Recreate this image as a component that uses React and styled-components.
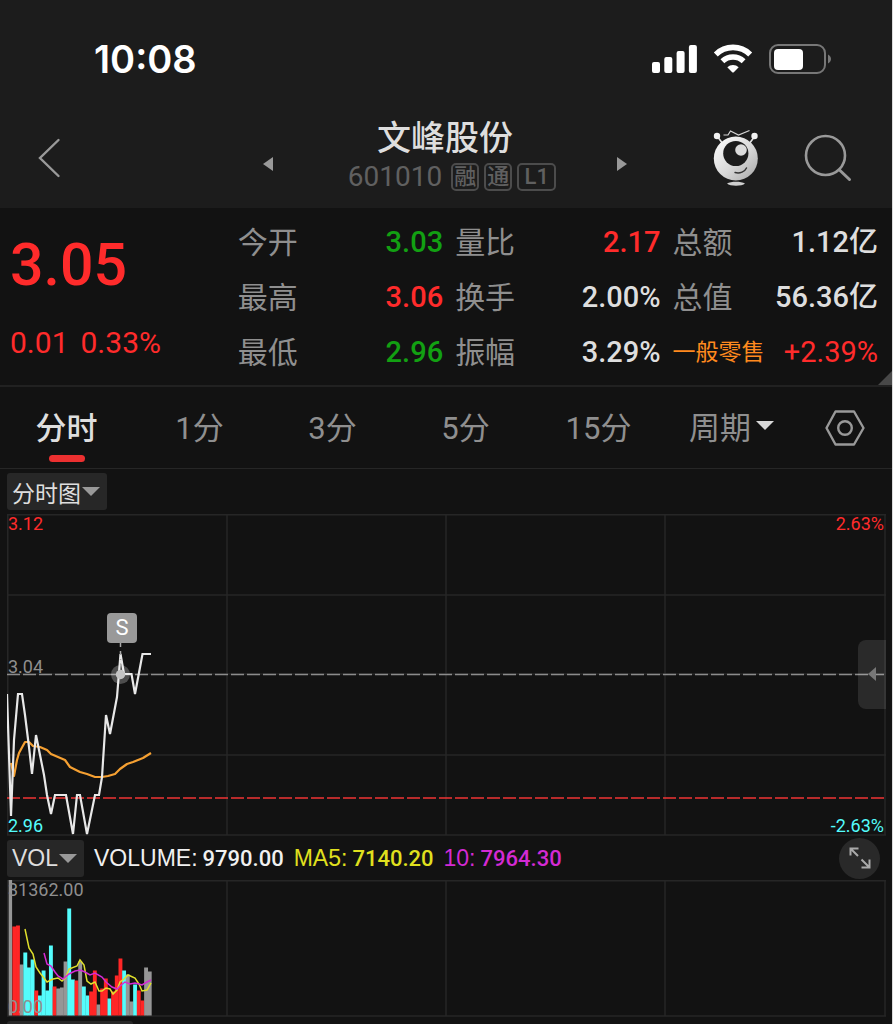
import React, { useState } from "react";
import styled, { createGlobalStyle } from "styled-components";

const quotes = [
  { label: "今开", value: "3.03", tone: "down" },
  { label: "量比", value: "2.17", tone: "up" },
  { label: "总额", value: "1.12亿" },
  { label: "最高", value: "3.06", tone: "up" },
  { label: "换手", value: "2.00%" },
  { label: "总值", value: "56.36亿" },
  { label: "最低", value: "2.96", tone: "down" },
  { label: "振幅", value: "3.29%" },
  { label: "一般零售", value: "+2.39%", tone: "up", sector: true },
];

const tabs = ["分时", "1分", "3分", "5分", "15分"];

const colors = {
  up: "#ff2b2b",
  down: "#12a012",
  text: "#dedede",
  muted: "#8f8f8f",
  cyan: "#54fcfc",
  line: "#262626",
};

// r = rise, f = fall, n = flat; the number is the bar height
const volumes = [
  ["n", 136], ["r", 89], ["r", 90], ["n", 51], ["f", 63], ["f", 48],
  ["f", 56], ["r", 25], ["f", 20], ["f", 45], ["f", 25], ["f", 70],
  ["r", 29], ["n", 27], ["n", 28], ["n", 54], ["f", 107], ["f", 36],
  ["r", 35], ["n", 54], ["f", 29], ["f", 20], ["r", 24], ["r", 45],
  ["n", 11], ["r", 27], ["r", 37], ["f", 17], ["r", 24], ["r", 40],
  ["r", 57], ["f", 45], ["n", 41], ["n", 14], ["f", 31], ["r", 25],
  ["r", 15], ["n", 48], ["n", 44],
];
const barFill = { r: "#ff2626", f: "#54fcfc", n: "#969696" };

const pricePoints =
  "0,180 4,302 7,226 11,180 15,180 18,201 22,233 25,260 29,221 33,241 37,261 40,281 44,300 48,281 59,281 66,320 70,281 73,281 80,320 88,281 92,281 95,263 99,201 103,220 110,183 113.5,140 117,160 124.5,160 128,180 135.5,140 144,140";
const averagePoints =
  "4,249 7,262 10,246 12,239 18,228 22,228 26,232 33,233 40,236 44,240 51,243 58,246 63,253 73,258 80,260 88,263 95,263 101,262 108,260 113,255 120,250 126,248 136,244 144,239";
const ma5Points =
  "18,49 22,68 26,74 29,87 33,93 37,98 40,102 46,99 51,98 55,101 59,97 62,89 70,86 73,80 77,85 80,101 84,104 88,102 92,111 95,111 99,108 103,109 106,114 110,110 113,102 117,99 121,95 128,98 132,104 135,111 140,110 144,103";
const ma10Points =
  "37,73 40,84 44,86 48,92 51,96 56,99 62,94 68,91 73,90 78,92 83,95 88,93 95,97 99,102 105,107 110,109 113,106 118,102 123,104 128,103 132,104 135,105 140,102 144,100";

const GridLines = ({ height, rows }) => (
  <g stroke={colors.line} strokeWidth="1.5">
    {[0.75, 220, 439, 658, 878].map((x) => (
      <line key={x} x1={x} x2={x} y1="0" y2={height} />
    ))}
    {rows.map((y) => (
      <line key={y} x1="0" x2="879" y1={y} y2={y} />
    ))}
  </g>
);

const PriceChart = () => (
  <ChartSvg viewBox="0 0 879 322" role="img" aria-label="分时图">
    <GridLines height={321} rows={[0.75, 81, 160, 241, 321]} />
    <line x1="0" x2="877" y1="160.5" y2="160.5" stroke="#8c8c8c" strokeWidth="1.5" strokeDasharray="13 3" />
    <line x1="0" x2="877" y1="284" y2="284" stroke="#f03535" strokeWidth="1.7" strokeDasharray="13 3" />
    <polyline points={averagePoints} fill="none" stroke="#f5a032" strokeWidth="2.2" strokeLinejoin="round" />
    <polyline points={pricePoints} fill="none" stroke="#e8e8e8" strokeWidth="2.2" />
    <circle cx="113.5" cy="160.5" r="9.5" fill="#fff" opacity="0.25" />
    <circle cx="113.5" cy="160.5" r="4.7" fill="#c4c4c4" />
    <line x1="113.5" x2="113.5" y1="129" y2="146" stroke="#a8a8a8" strokeWidth="1.5" strokeDasharray="4 4" />
    <rect x="100" y="99" width="30" height="30" rx="4" fill="#999" />
    <text x="115" y="121" textAnchor="middle" fontSize="22" fill="#fff">
      S
    </text>
  </ChartSvg>
);

const VolumeChart = () => (
  <ChartSvg viewBox="0 0 879 137" role="img" aria-label="成交量">
    <GridLines height={136} rows={[0.75, 136]} />
    {volumes.map(([kind, h], i) => (
      <rect
        key={i}
        x={1.7 + i * 3.66}
        y={135.5 - h}
        width={i === 0 ? 3.4 : 3.9}
        height={h}
        fill={barFill[kind]}
      />
    ))}
    <polyline points={ma5Points} fill="none" stroke="#e0e02c" strokeWidth="1.5" />
    <polyline points={ma10Points} fill="none" stroke="#d42ad4" strokeWidth="1.5" />
  </ChartSvg>
);

const StatusIcons = () => (
  <svg width="180" height="32" viewBox="0 0 180 32" aria-hidden="true">
    <g fill="#fff">
      <rect x="0" y="19" width="8" height="11" rx="2" />
      <rect x="12.3" y="14" width="8" height="16" rx="2" />
      <rect x="24.6" y="8" width="8" height="22" rx="2" />
      <rect x="36.9" y="2" width="8" height="28" rx="2" />
    </g>
    <g fill="none" stroke="#fff" strokeWidth="5.6">
      <path d="M63.8 11.4a24.5 24.5 0 0 1 34.4 0" />
      <path d="M70.4 18.2a15.6 15.6 0 0 1 21.2 0" />
    </g>
    <path d="M75.3 24.2a8.4 8.4 0 0 1 11.4 0l-4.9 5a1.2 1.2 0 0 1-1.6 0z" fill="#fff" />
    <rect x="118" y="2" width="55" height="28" rx="8" fill="none" stroke="#777" strokeWidth="2" />
    <rect x="122" y="6" width="29" height="21" rx="4" fill="#fff" />
    <path d="M176 11.5c4 2 4 7 0 9z" fill="#777" />
  </svg>
);

const RobotIcon = () => (
  <svg width="46" height="58" viewBox="0 0 46 58" aria-hidden="true">
    <defs>
      <linearGradient id="robot" x1="0" y1="0" x2="1" y2="1">
        <stop offset="0" stopColor="#fff" />
        <stop offset="0.55" stopColor="#d8d8d8" />
        <stop offset="1" stopColor="#a5a5a5" />
      </linearGradient>
    </defs>
    <path d="M4 7l6 8M42 7l-6 8" stroke="#e4e4e4" strokeWidth="1.6" />
    <circle cx="4" cy="7" r="3.2" fill="#f2f2f2" />
    <circle cx="41.5" cy="7" r="3.2" fill="#f2f2f2" />
    <path d="M10.500 6h4.500l2.500-4 8 4 11-4.500" fill="none" stroke="#d5d5d5" strokeWidth="1.2" />
    <circle cx="22.8" cy="29.5" r="22" fill="url(#robot)" />
    <circle cx="22.8" cy="24.5" r="12.6" fill="#1c1c1c" />
    <circle cx="28" cy="21" r="5.8" fill="#dcdcdc" />
    <path d="M22 43.5c5 1.5 10-1 11.5-4.5" fill="none" stroke="#333" strokeWidth="1.4" strokeLinecap="round" />
    <path d="M14 54.5c4-2.3 14-2.3 18 0-3 3-15 3-18 0z" fill="#cfcfcf" />
  </svg>
);

const SearchIcon = () => (
  <svg width="48" height="48" viewBox="0 0 48 48" fill="none" stroke="#999" aria-hidden="true">
    <circle cx="21.5" cy="21.5" r="19.5" strokeWidth="2.6" />
    <path d="M35.5 36l10 9.5" strokeWidth="3" strokeLinecap="round" />
  </svg>
);

const HexIcon = () => (
  <svg width="40" height="36" viewBox="0 0 40 36" fill="none" stroke="#999" strokeWidth="2.4" aria-hidden="true">
    <path d="M10.5 1.5h18.500l9.500 16.500-9.500 16.500h-18.500L1.500 18z" strokeLinejoin="round" />
    <circle cx="20" cy="18" r="6.8" />
  </svg>
);

const ExpandIcon = () => (
  <svg width="22" height="22" viewBox="0 0 22 22" fill="none" stroke="#aaa" strokeWidth="2" aria-hidden="true">
    <path d="M1.5 8.5v-7h8M2 2l7 7M20.5 12.5v8h-8M20 20l-7.5-7.5" />
  </svg>
);

function App() {
  const [active, setActive] = useState("分时");

  return (
    <Page>
      <GlobalStyle />
      <TopArea>
        <StatusBar>
          <Clock>10:08</Clock>
          <StatusIcons />
        </StatusBar>
        <Header>
          <IconButton aria-label="返回">
            <svg width="24" height="40" viewBox="0 0 24 40" aria-hidden="true">
              <path d="M20.5 2L2 20l18.5 18" fill="none" stroke="#999" strokeWidth="2.4" strokeLinecap="round" />
            </svg>
          </IconButton>
          <StockNav>
            <StepButton aria-label="上一只">
              <svg width="10" height="14" aria-hidden="true">
                <path d="M10 0v14L0 7z" fill="#999" />
              </svg>
            </StepButton>
            <StockTitle>
              <h1>文峰股份</h1>
              <div className="code">
                <span>601010</span>
                <Badge>融</Badge>
                <Badge>通</Badge>
                <Badge $wide>L1</Badge>
              </div>
            </StockTitle>
            <StepButton aria-label="下一只">
              <svg width="10" height="14" aria-hidden="true">
                <path d="M0 0v14l10-7z" fill="#999" />
              </svg>
            </StepButton>
          </StockNav>
          <Actions>
            <IconButton aria-label="助手">
              <RobotIcon />
            </IconButton>
            <IconButton aria-label="搜索">
              <SearchIcon />
            </IconButton>
          </Actions>
        </Header>
      </TopArea>

      <QuotePanel>
        <PriceBlock>
          <div className="price">3.05</div>
          <div className="change">
            <span>0.01</span>
            <span>0.33%</span>
          </div>
        </PriceBlock>
        {quotes.map((q) => (
          <Quote key={q.label} $tone={q.tone} $sector={q.sector}>
            <span className="label">{q.label}</span>
            <span className="value">{q.value}</span>
          </Quote>
        ))}
        <Corner />
      </QuotePanel>

      <TabBar>
        {tabs.map((tab) => (
          <Tab key={tab} $active={tab === active} onClick={() => setActive(tab)}>
            {tab}
          </Tab>
        ))}
        <Tab>
          周期
          <Caret $color="#d8d8d8" />
        </Tab>
        <SettingsButton aria-label="设置">
          <HexIcon />
        </SettingsButton>
      </TabBar>

      <ChartArea>
        <ToolRow>
          <Chip>
            分时图
            <Caret $color="#999" />
          </Chip>
        </ToolRow>
        <ChartBox>
          <PriceChart />
          <AxisLabels>
            <Axis $color={colors.up}>
              <span>3.12</span>
              <span>2.63%</span>
            </Axis>
            <Axis $color={colors.muted} $aboveLine>
              <span>3.04</span>
            </Axis>
            <Axis $color={colors.cyan}>
              <span>2.96</span>
              <span>-2.63%</span>
            </Axis>
          </AxisLabels>
          <DrawerHandle aria-label="展开盘口">
            <svg width="8" height="14" aria-hidden="true">
              <path d="M8 0v14L0 7z" fill="#777" />
            </svg>
          </DrawerHandle>
        </ChartBox>

        <IndicatorRow>
          <Chip>
            VOL
            <Caret $color="#999" />
          </Chip>
          <Indicator $color="#f0f0f0">
            <span className="name">VOLUME:</span>
            <span>9790.00</span>
          </Indicator>
          <Indicator $color="#e0e01e">
            <span className="name">MA5:</span>
            <span>7140.20</span>
          </Indicator>
          <Indicator $color="#d42ad4">
            <span className="name">10:</span>
            <span>7964.30</span>
          </Indicator>
          <RoundButton aria-label="全屏">
            <ExpandIcon />
          </RoundButton>
        </IndicatorRow>
        <ChartBox>
          <VolumeChart />
          <AxisLabels>
            <Axis $color={colors.muted}>
              <span>31362.00</span>
            </Axis>
            <Axis $color={colors.muted}>
              <span>0.00</span>
            </Axis>
          </AxisLabels>
        </ChartBox>
        <NextChip />
      </ChartArea>
    </Page>
  );
}

export default App;

const GlobalStyle = createGlobalStyle`
  * {
    box-sizing: border-box;
  }
  body {
    margin: 0;
    background: #121212;
    font-family: Roboto, "Noto Sans CJK SC", sans-serif;
    color: ${colors.text};
  }
  button {
    background: none;
    border: 0;
    padding: 0;
    margin: 0;
    font: inherit;
    color: inherit;
    cursor: pointer;
  }
  svg {
    display: block;
    flex: none;
  }
`;

const Page = styled.main`
  min-height: 100vh;
  background: #121212;
  border-right: 1px solid #dcdcdc;
`;

const TopArea = styled.div`
  background: #1c1c1c;
  height: 208px;
`;

const StatusBar = styled.div`
  display: flex;
  justify-content: space-between;
  align-items: center;
  height: 118px;
  padding: 0 60px 0 94px;
`;

const Clock = styled.div`
  font-family: Inter, sans-serif;
  font-size: 38px;
  line-height: 40px;
  font-weight: 600;
  color: #fff;
`;

const Header = styled.header`
  display: grid;
  grid-template-columns: 1fr auto 1fr;
  align-items: center;
  height: 80px;
  padding: 0 40px 0 38px;
`;

const IconButton = styled.button`
  display: flex;
  justify-self: start;
`;

const StockNav = styled.div`
  display: flex;
  align-items: center;
  justify-content: space-between;
  width: 364px;
`;

const StepButton = styled.button`
  padding-top: 12px;
`;

const StockTitle = styled.div`
  display: flex;
  flex-direction: column;
  align-items: center;

  h1 {
    margin: 0;
    font-size: 34px;
    line-height: 38px;
    font-weight: 500;
  }
  .code {
    display: flex;
    align-items: center;
    gap: 5px;
    padding-left: 14px;
    font-size: 28px;
    line-height: 40px;
    color: #606060;
  }
  .code > span:first-child {
    margin-right: 4px;
  }
`;

const Badge = styled.span`
  display: flex;
  align-items: center;
  justify-content: center;
  width: ${({ $wide }) => ($wide ? 39 : 28)}px;
  height: 28px;
  border: 2px solid #4c4c4c;
  border-radius: 5px;
  font-size: 22px;
  line-height: 24px;
  font-weight: 500;
`;

const Actions = styled.div`
  display: flex;
  align-items: center;
  justify-content: flex-end;
  gap: 45px;
`;

const QuotePanel = styled.section`
  position: relative;
  display: grid;
  grid-template-columns: 1.05fr 1fr 1fr 1fr;
  grid-template-rows: repeat(3, 55px);
  column-gap: 12px;
  padding: 7px 14px 5px 10px;
  border-bottom: 2px solid #212121;
`;

const PriceBlock = styled.div`
  grid-row: 1 / 4;
  color: ${colors.up};

  .price {
    font-size: 59px;
    font-weight: 500;
    line-height: 100px;
  }
  .change {
    display: flex;
    gap: 12px;
    font-size: 30px;
    line-height: 56px;
  }
`;

const Quote = styled.div`
  display: flex;
  align-items: center;
  justify-content: space-between;
  white-space: nowrap;
  line-height: 55px;

  .label {
    font-size: ${({ $sector }) => ($sector ? 23 : 30)}px;
    color: ${({ $sector }) => ($sector ? "#ff8a1e" : colors.muted)};
  }
  .value {
    font-size: 29px;
    font-weight: ${({ $sector }) => ($sector ? 400 : 500)};
    color: ${({ $tone }) => colors[$tone] || colors.text};
  }
`;

const Corner = styled.i`
  position: absolute;
  right: 0;
  bottom: 0;
  border-left: 14px solid transparent;
  border-bottom: 14px solid #484848;
`;

const TabBar = styled.nav`
  display: flex;
  height: 82px;
  border-bottom: 1px solid ${colors.line};
`;

const Tab = styled.button`
  position: relative;
  flex: 133 1 0;
  display: flex;
  align-items: center;
  justify-content: center;
  gap: 5px;
  padding-bottom: 4px;
  font-size: 31px;
  font-weight: ${({ $active }) => ($active ? 500 : 400)};
  color: ${({ $active }) => ($active ? colors.text : colors.muted)};

  &::after {
    content: "";
    display: ${({ $active }) => ($active ? "block" : "none")};
    position: absolute;
    bottom: 6px;
    width: 36px;
    height: 7px;
    border-radius: 4px;
    background: #ec3030;
  }
`;

const SettingsButton = styled.button`
  flex: 94 1 0;
  display: flex;
  align-items: center;
  justify-content: center;
`;

const Caret = styled.i`
  border: 9px solid transparent;
  border-top-color: ${({ $color }) => $color};
  border-bottom: 0;
`;

const ChartArea = styled.section`
  padding: 0 6px 0 7px;
`;

const ToolRow = styled.div`
  display: flex;
  align-items: center;
  height: 45px;
`;

const Chip = styled.button`
  display: flex;
  align-items: center;
  gap: 1px;
  height: 37px;
  padding: 0 7px 0 5px;
  border-radius: 3px;
  background: #272727;
  font-family: "Liberation Sans", "Noto Sans CJK SC", sans-serif;
  font-size: 23px;
`;

const ChartBox = styled.div`
  position: relative;
`;

const ChartSvg = styled.svg`
  width: 100%;
  height: auto;
`;

const AxisLabels = styled.div`
  position: absolute;
  inset: 0;
  display: flex;
  flex-direction: column;
  justify-content: space-between;
  padding: 0 2px 0 1px;
  pointer-events: none;
`;

const Axis = styled.div`
  display: flex;
  justify-content: space-between;
  padding-bottom: ${({ $aboveLine }) => ($aboveLine ? 16 : 0)}px;
  font-size: 18px;
  line-height: 20px;
  color: ${({ $color }) => $color};
`;

const DrawerHandle = styled.button`
  position: absolute;
  right: 0;
  top: 39%;
  display: flex;
  align-items: center;
  justify-content: center;
  width: 28px;
  height: 69px;
  border-radius: 8px 0 0 8px;
  background: rgba(255, 255, 255, 0.1);
`;

const IndicatorRow = styled.div`
  display: flex;
  align-items: center;
  gap: 10px;
  height: 44px;
`;

const Indicator = styled.div`
  display: flex;
  align-items: baseline;
  gap: 5px;
  font-size: 22px;
  font-weight: 500;
  color: ${({ $color }) => $color};

  .name {
    font-family: "Liberation Sans", sans-serif;
    font-size: 23px;
  }
`;

const RoundButton = styled.button`
  display: flex;
  align-items: center;
  justify-content: center;
  width: 41px;
  height: 41px;
  margin-left: auto;
  margin-right: 6px;
  border-radius: 50%;
  background: #292929;
`;

const NextChip = styled.div`
  width: 126px;
  height: 3px;
  margin-top: 4px;
  border-radius: 3px 3px 0 0;
  background: #272727;
`;
